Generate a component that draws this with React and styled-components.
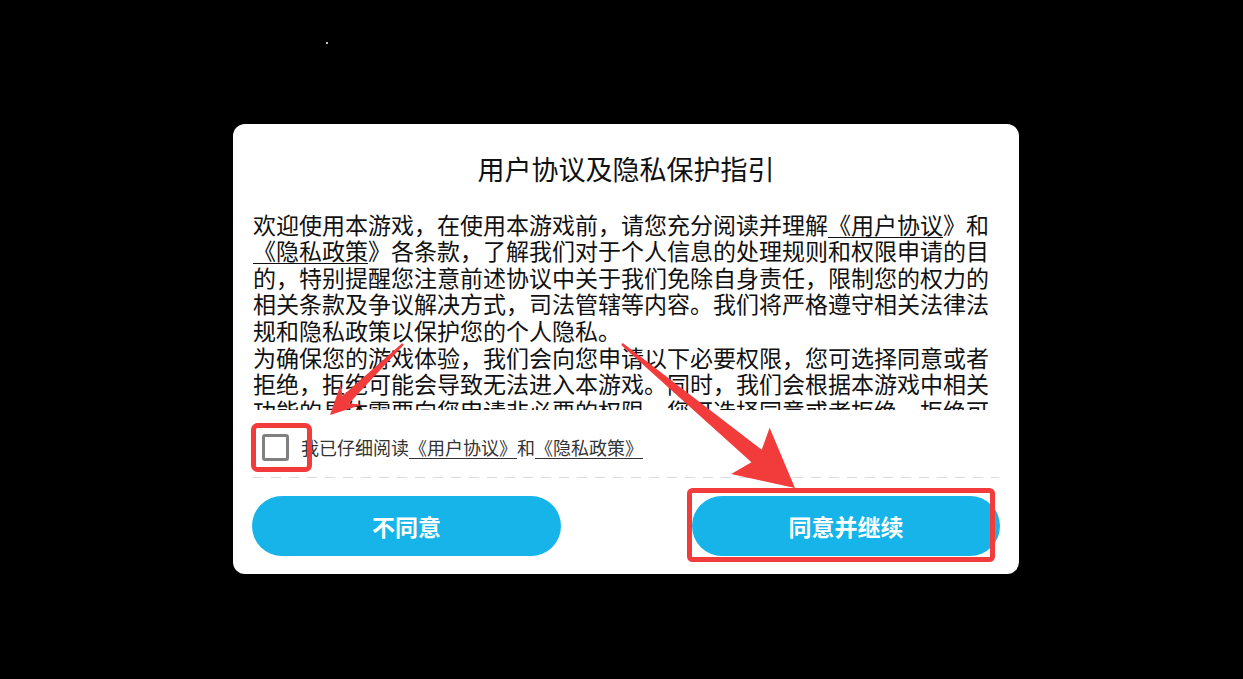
import React from 'react';
import styled, { createGlobalStyle } from 'styled-components';

const GlobalStyle = createGlobalStyle`
  html, body {
    margin: 0;
    padding: 0;
    background: #000;
  }
  * {
    box-sizing: border-box;
  }
`;

const Page = styled.div`
  position: relative;
  width: 1243px;
  height: 679px;
  background: #000;
  padding: 124px 0 0 233px;
  font-family: "Noto Sans CJK SC", "Noto Sans", sans-serif;
  overflow: hidden;
`;

const Dialog = styled.div`
  width: 786px;
  height: 450px;
  background: #fff;
  border-radius: 12px;
  padding: 26px 20px 18px;
  display: flex;
  flex-direction: column;
`;

const Title = styled.h1`
  margin: 0;
  font-size: 27px;
  line-height: 37px;
  font-weight: 400;
  color: #111;
  text-align: center;
`;

const Body = styled.div`
  margin-top: 23.6px;
  height: 199.5px;
  overflow-y: auto;
  font-size: 23px;
  line-height: 26.6px;
  color: #111;
  scrollbar-width: none;
  &::-webkit-scrollbar {
    display: none;
  }
  p {
    margin: 0;
  }
`;

const Link = styled.span`
  text-decoration: underline;
  text-decoration-thickness: 1px;
  text-underline-offset: 3px;
`;

const CheckRow = styled.label`
  margin-top: 12px;
  height: 50px;
  display: flex;
  align-items: center;
  gap: 12px;
  padding-left: 9px;
  font-size: 18px;
  color: #333;
  cursor: pointer;
`;

const Box = styled.span`
  width: 27px;
  height: 27px;
  border: 3px solid #808080;
  border-radius: 3px;
  flex-shrink: 0;
`;

const Divider = styled.div`
  margin-top: 5px;
  height: 1px;
  background: repeating-linear-gradient(
    to right,
    #dcdcdc 0,
    #dcdcdc 10px,
    transparent 10px,
    transparent 18px
  );
`;

const Actions = styled.div`
  margin: 18px -1px 0;
  display: flex;
  justify-content: space-between;
`;

const Button = styled.button`
  width: ${props => props.width || '309px'};
  height: 60px;
  border: none;
  border-radius: 30px;
  background: #16b4e8;
  color: #fff;
  font-family: inherit;
  font-size: 23px;
  font-weight: 700;
  cursor: pointer;
`;

const Overlay = styled.svg`
  position: absolute;
  left: 0;
  top: 0;
  pointer-events: none;
`;

const RED = '#f23b3b';

function Arrow({ x1, y1, x2, y2, head, half, shaft }) {
  const dx = x2 - x1;
  const dy = y2 - y1;
  const L = Math.sqrt(dx * dx + dy * dy);
  const angle = (Math.atan2(dy, dx) * 180) / Math.PI;
  const pts = [
    [0, -1.2],
    [L - head + 8, -shaft],
    [L - head, -half],
    [L, 0],
    [L - head, half],
    [L - head + 8, shaft],
    [0, 1.2],
  ]
    .map(p => p.join(','))
    .join(' ');
  return (
    <polygon
      points={pts}
      fill={RED}
      transform={`translate(${x1} ${y1}) rotate(${angle})`}
    />
  );
}

export default function App() {
  return (
    <>
      <GlobalStyle />
      <Page>
        <Dialog>
          <Title>用户协议及隐私保护指引</Title>
          <Body>
            <p>
              欢迎使用本游戏，在使用本游戏前，请您充分阅读并理解<Link>《用户协议</Link>》和
              <Link>《隐私政策</Link>》各条款，了解我们对于个人信息的处理规则和权限申请的目的，特别提醒您注意前述协议中关于我们免除自身责任，限制您的权力的相关条款及争议解决方式，司法管辖等内容。我们将严格遵守相关法律法规和隐私政策以保护您的个人隐私。
            </p>
            <p>
              为确保您的游戏体验，我们会向您申请以下必要权限，您可选择同意或者拒绝，拒绝可能会导致无法进入本游戏。同时，我们会根据本游戏中相关功能的具体需要向您申请非必要的权限，您可选择同意或者拒绝，拒绝可能会导致部分功能无法使用。
            </p>
          </Body>
          <CheckRow>
            <Box />
            <span>
              我已仔细阅读<Link>《用户协议》</Link>和<Link>《隐私政策》</Link>
            </span>
          </CheckRow>
          <Divider />
          <Actions>
            <Button>不同意</Button>
            <Button width="308px">同意并继续</Button>
          </Actions>
        </Dialog>

        <Overlay width="1243" height="679" viewBox="0 0 1243 679">
          <circle cx="327" cy="43" r="1" fill="#fff" />
          <rect x="253.5" y="425.5" width="56" height="44" rx="4" fill="none" stroke={RED} strokeWidth="5" />
          <rect x="689.5" y="490.5" width="303" height="69" rx="3" fill="none" stroke={RED} strokeWidth="5" />
          <Arrow x1={403} y1={344} x2={330} y2={415} head={30} half={15} shaft={5} />
          <Arrow x1={622} y1={344} x2={795} y2={488} head={58} half={30} shaft={8} />
        </Overlay>
      </Page>
    </>
  );
}
